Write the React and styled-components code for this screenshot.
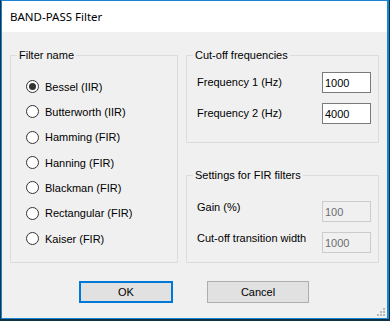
import React from 'react';
import styled, { createGlobalStyle } from 'styled-components';

const GlobalStyle = createGlobalStyle`
  html, body {
    margin: 0;
    padding: 0;
    background: #0b3440;
  }
  body {
    font-family: "Liberation Sans", Arial, sans-serif;
    font-size: 11px;
    color: #000;
  }
`;

const Desktop = styled.div`
  width: 390px;
  height: 321px;
  padding-left: 1px;
  box-sizing: border-box;
  overflow: hidden;
`;

const Window = styled.div`
  position: relative;
  width: 388px;
  height: 319px;
  box-sizing: border-box;
  border: 1px solid #1883d7;
  border-right-width: 2px;
  display: flex;
  flex-direction: column;
  background: #f0f0f0;
`;

const TitleBar = styled.div`
  height: 31px;
  flex: none;
  background: #fff;
  display: flex;
  align-items: center;
  padding-left: 8px;
  font-family: "Noto Sans", "Open Sans", sans-serif;
  font-size: 11.5px;
  color: #000;
`;

const Body = styled.div`
  flex: 1;
  padding: 17px 8px 0 8px;
  display: flex;
  flex-direction: column;
`;

const Groups = styled.div`
  display: grid;
  grid-template-columns: 168px 193px;
  grid-template-rows: 94px 94px;
  column-gap: 8px;
  row-gap: 26px;
`;

const GroupBox = styled.fieldset`
  margin: 0;
  padding: 0;
  border: 1px solid #dcdcdc;
  min-width: 0;
  box-sizing: border-box;
  grid-row: ${p => p.$span ? '1 / span 2' : 'auto'};
`;

const Legend = styled.legend`
  margin-left: 6px;
  padding: 0 2px;
  line-height: 13px;
  font-size: 11px;
  color: #000;
`;

const GroupContent = styled.div`
  display: flex;
  flex-direction: column;
  padding: ${p => p.$pad};
`;

const RadioRow = styled.label`
  display: flex;
  align-items: center;
  height: 25.33px;
  gap: 6px;
`;

const RadioDot = styled.span`
  width: 13px;
  height: 13px;
  box-sizing: border-box;
  border-radius: 50%;
  border: 1px solid #333;
  background: #fff;
  display: flex;
  align-items: center;
  justify-content: center;
  flex: none;

  &::after {
    content: '';
    width: 7px;
    height: 7px;
    border-radius: 50%;
    background: #333;
    display: ${p => p.$checked ? 'block' : 'none'};
  }
`;

const FieldRow = styled.div`
  display: flex;
  justify-content: space-between;
  align-items: ${p => p.$top ? 'flex-start' : 'center'};
  height: 21px;
  & + & {
    margin-top: ${p => p.$gap || 11}px;
  }
`;

const FieldLabel = styled.span`
  line-height: 13px;
`;

const TextBox = styled.div`
  width: 49px;
  height: 21px;
  box-sizing: border-box;
  border: 1px solid ${p => p.$disabled ? '#cccccc' : '#7a7a7a'};
  background: ${p => p.$disabled ? '#f0f0f0' : '#fff'};
  color: ${p => p.$disabled ? '#6d6d6d' : '#000'};
  display: flex;
  align-items: center;
  padding-left: 2px;
`;

const Footer = styled.div`
  display: flex;
  padding-left: 69px;
  gap: 34px;
  margin-top: 18px;
`;

const Button = styled.div`
  width: ${p => p.$w}px;
  height: 22px;
  box-sizing: border-box;
  border: ${p => p.$default ? '2px solid #0078d7' : '1px solid #adadad'};
  background: #e1e1e1;
  display: flex;
  align-items: center;
  justify-content: center;
`;

const Grip = styled.svg`
  position: absolute;
  right: 1px;
  bottom: 1px;
`;

const filters = [
  'Bessel (IIR)',
  'Butterworth (IIR)',
  'Hamming (FIR)',
  'Hanning (FIR)',
  'Blackman (FIR)',
  'Rectangular (FIR)',
  'Kaiser (FIR)',
];

export default function App() {
  return (
    <>
      <GlobalStyle />
      <Desktop>
        <Window>
          <TitleBar>BAND-PASS Filter</TitleBar>
          <Body>
            <Groups>
              <GroupBox $span>
                <Legend>Filter name</Legend>
                <GroupContent $pad="12px 0 0 15px">
                  {filters.map((f, i) => (
                    <RadioRow key={f}>
                      <RadioDot $checked={i === 0} />
                      {f}
                    </RadioRow>
                  ))}
                </GroupContent>
              </GroupBox>
              <GroupBox>
                <Legend>Cut-off frequencies</Legend>
                <GroupContent $pad="10px 7px 0 10px">
                  <FieldRow>
                    <FieldLabel>Frequency 1 (Hz)</FieldLabel>
                    <TextBox>1000</TextBox>
                  </FieldRow>
                  <FieldRow>
                    <FieldLabel>Frequency 2 (Hz)</FieldLabel>
                    <TextBox>4000</TextBox>
                  </FieldRow>
                </GroupContent>
              </GroupBox>
              <GroupBox>
                <Legend>Settings for FIR filters</Legend>
                <GroupContent $pad="19px 7px 0 10px">
                  <FieldRow $top>
                    <FieldLabel>Gain (%)</FieldLabel>
                    <TextBox $disabled>100</TextBox>
                  </FieldRow>
                  <FieldRow $top $gap={10}>
                    <FieldLabel>Cut-off transition width</FieldLabel>
                    <TextBox $disabled>1000</TextBox>
                  </FieldRow>
                </GroupContent>
              </GroupBox>
            </Groups>
            <Footer>
              <Button $w={94} $default>OK</Button>
              <Button $w={102}>Cancel</Button>
            </Footer>
          </Body>
          <Grip width="9" height="9" viewBox="0 0 9 9">
            <g fill="#b8b8b8">
              <rect x="6" y="0" width="2" height="2" />
              <rect x="3" y="3" width="2" height="2" />
              <rect x="6" y="3" width="2" height="2" />
              <rect x="0" y="6" width="2" height="2" />
              <rect x="3" y="6" width="2" height="2" />
              <rect x="6" y="6" width="2" height="2" />
            </g>
          </Grip>
        </Window>
      </Desktop>
    </>
  );
}
